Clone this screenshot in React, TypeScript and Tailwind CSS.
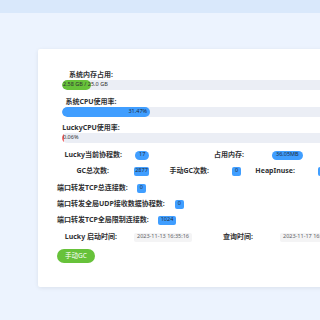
import React from "react";

const font = { fontFamily: '"Noto Sans", "Noto Sans CJK SC", sans-serif' };

function Bar({ pct, color, text, right }: { pct: number; color: string; text: string; right?: boolean }) {
  return (
    <div className="ml-[5px] w-[280px] h-[10px] rounded-full bg-[#ebeef5] relative overflow-hidden">
      <div className="h-full rounded-full flex items-center" style={{ width: `${Math.max(pct, 0.6)}%`, background: color }}>
        {right ? (
          <span className="ml-auto mr-[3px] text-[5.5px] leading-none text-[#1f2d3d]">{text}</span>
        ) : null}
      </div>
      {!right ? (
        <span className="absolute left-[1px] top-0 h-full flex items-center text-[5.5px] leading-none text-[#303133]">{text}</span>
      ) : null}
    </div>
  );
}

function Pill({ children }: { children: React.ReactNode }) {
  return (
    <span className="inline-flex items-center h-[9px] px-[4px] rounded-full bg-[#409eff] text-[5.5px] leading-none text-[#1f2d3d]">
      {children}
    </span>
  );
}

function Box({ children }: { children: React.ReactNode }) {
  return (
    <span className="inline-flex items-center justify-center h-[9px] min-w-[9px] px-[3px] rounded-[2px] bg-[#409eff] text-[5.5px] leading-none text-[#1f2d3d]">
      {children}
    </span>
  );
}

function Tag({ children }: { children: React.ReactNode }) {
  return (
    <span className="inline-flex items-center h-[9px] px-[3px] rounded-[2px] bg-[#f4f4f5] text-[5.5px] leading-none text-[#606266] whitespace-nowrap">
      {children}
    </span>
  );
}

const L = "text-[7px] leading-[10px] font-bold text-[#303133] whitespace-nowrap";

export default function App() {
  return (
    <div className="w-[320px] h-[320px] bg-[#ecf3fe] overflow-hidden" style={font}>
      <div className="h-[13px] bg-[#d9e8fb]" />
      <div className="ml-[38px] mt-[36px] w-[320px] h-[238px] bg-white rounded-[2px] shadow-[0_1px_4px_rgba(0,0,0,0.08)] pt-[21px] pl-[19px]">
        <div className={`${L} w-[68px] text-center`}>系统内存占用:</div>
        <Bar pct={10.32} color="#67c23a" text="2.58 GB / 25.0 GB" />
        <div className={`${L} w-[68px] text-center mt-[7px]`}>系统CPU使用率:</div>
        <Bar pct={31.47} color="#409eff" text="31.47%" right />
        <div className={`${L} w-[68px] text-center mt-[6px]`}>LuckyCPU使用率:</div>
        <Bar pct={0.06} color="#f56c6c" text="0.06%" />

        <div className="mt-[4px] h-[16px] flex items-center">
          <div className={`${L} w-[65px] text-right`}>Lucky当前协程数:</div>
          <div className="w-[26px] pl-[13px] flex"><Pill>17</Pill></div>
          <div className={`${L} w-[96px] text-right`}>占用内存:</div>
          <div className="pl-[28px] flex"><Pill>36.05MB</Pill></div>
        </div>
        <div className="h-[16px] flex items-center">
          <div className={`${L} w-[52px] text-right`}>GC总次数:</div>
          <div className="w-[40px] pl-[25px] flex"><Box>2877</Box></div>
          <div className={`${L} w-[60px] text-right`}>手动GC次数:</div>
          <div className="w-[30px] pl-[23px] flex"><Box>0</Box></div>
          <div className={`${L} w-[56px] text-right`}>HeapInuse:</div>
          <div className="pl-[23px] flex"><Box>45.2MB</Box></div>
        </div>
        <div className="mt-[1px] h-[16px] flex items-center gap-[9px]">
          <div className={L}>端口转发TCP总连接数:</div>
          <Box>0</Box>
        </div>
        <div className="h-[16px] flex items-center gap-[10px]">
          <div className={L}>端口转发全局UDP接收数据协程数:</div>
          <Box>0</Box>
        </div>
        <div className="h-[16px] flex items-center gap-[9px]">
          <div className={L}>端口转发TCP全局限制连接数:</div>
          <Box>1024</Box>
        </div>
        <div className="mt-[1px] h-[16px] flex items-center">
          <div className={`${L} w-[60px] text-right`}>Lucky 启动时间:</div>
          <div className="w-[83px] pl-[17px] flex"><Tag>2023-11-13 16:35:16</Tag></div>
          <div className={`${L} w-[53px] text-right`}>查询时间:</div>
          <div className="pl-[27px] flex"><Tag>2023-11-17 16:42:08</Tag></div>
        </div>
        <button className="mt-[4px] w-[38px] h-[14px] rounded-full bg-[#67c23a] text-white text-[6.5px] leading-none flex items-center justify-center">
          手动GC
        </button>
      </div>
    </div>
  );
}
